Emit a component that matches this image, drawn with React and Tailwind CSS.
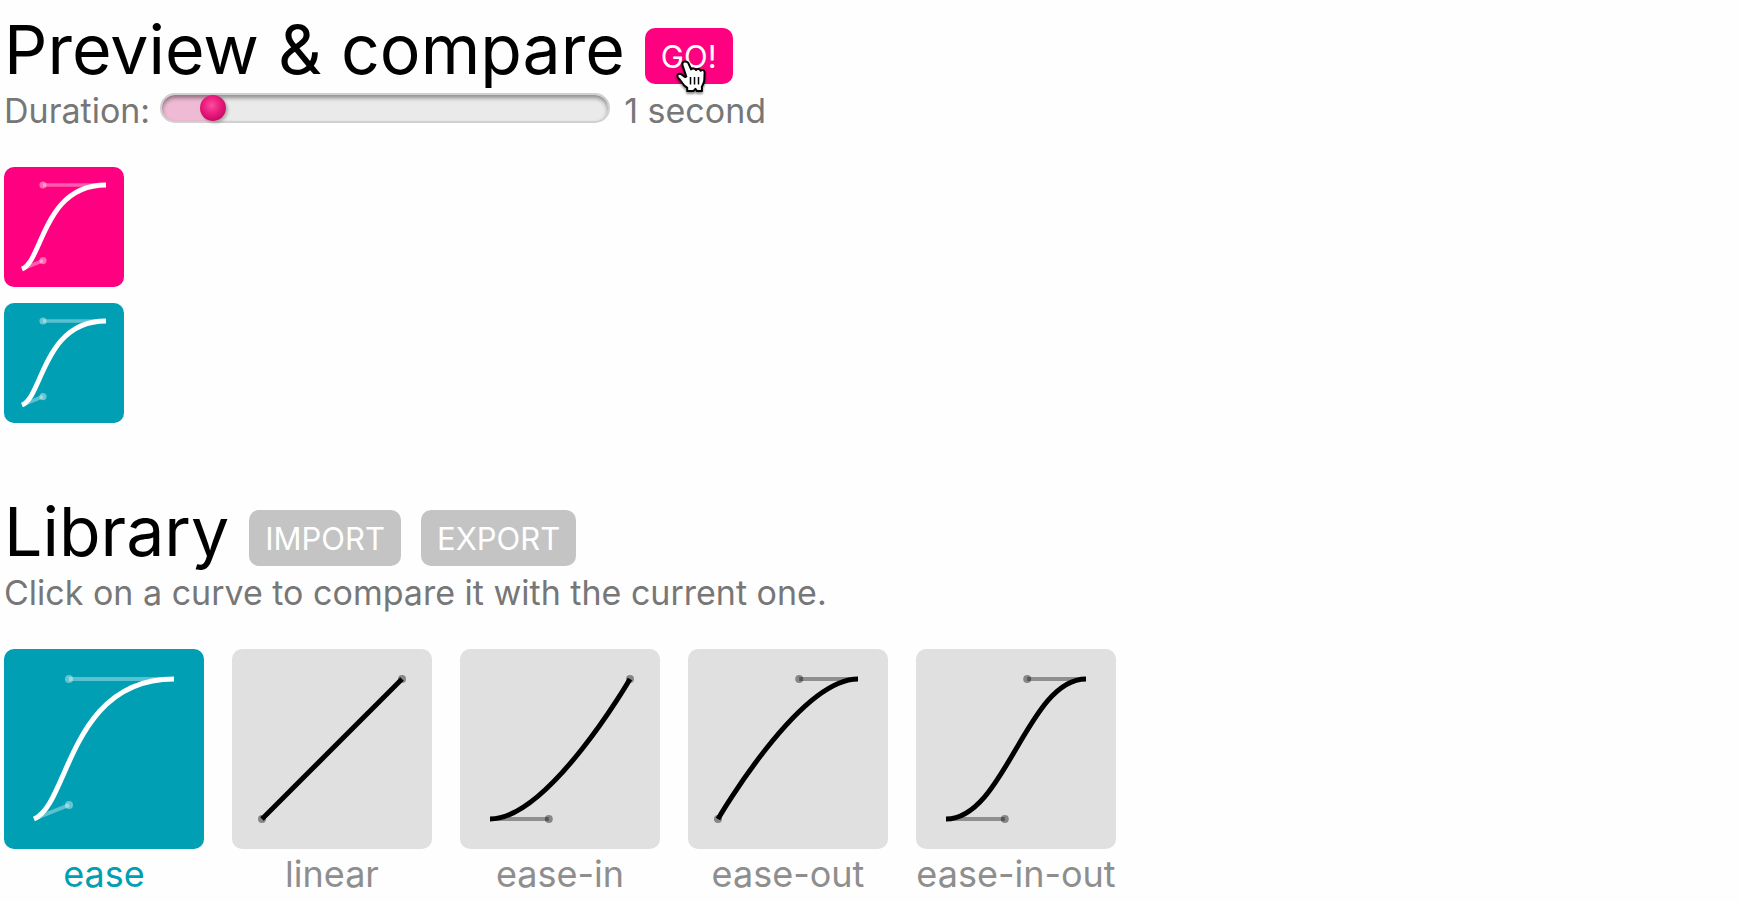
import React, { useState } from "react";

const CURVES = [
  { name: "ease", points: [0.25, 0.1, 0.25, 1] },
  { name: "linear", points: [0, 0, 1, 1] },
  { name: "ease-in", points: [0.42, 0, 1, 1] },
  { name: "ease-out", points: [0, 0, 0.58, 1] },
  { name: "ease-in-out", points: [0.42, 0, 0.58, 1] },
];

function Curve({ points, stroke = 5, handle = 4, dot = 4 }) {
  const px = (v) => 30 + v * 140;
  const py = (v) => 170 - v * 140;
  const [a, b, c, d] = points;
  return (
    <svg viewBox="0 0 200 200" className="block size-full" fill="none" stroke="currentColor" aria-hidden="true">
      <path d={`M${px(0)} ${py(0)}L${px(a)} ${py(b)}M${px(1)} ${py(1)}L${px(c)} ${py(d)}`} strokeWidth={handle} opacity="0.36" />
      <circle cx={px(a)} cy={py(b)} r={dot} fill="currentColor" stroke="none" opacity="0.4" />
      <circle cx={px(c)} cy={py(d)} r={dot} fill="currentColor" stroke="none" opacity="0.4" />
      <path d={`M${px(0)} ${py(0)}C${px(a)} ${py(b)} ${px(c)} ${py(d)} ${px(1)} ${py(1)}`} strokeWidth={stroke} />
    </svg>
  );
}

function HandCursor() {
  return (
    <svg viewBox="0 0 32 34" className="pointer-events-none absolute top-8 left-[30px] h-[34px] w-8 drop-shadow-[0_2px_1px_rgba(0,0,0,0.45)]" aria-hidden="true">
      <path
        d="M10 1.500c-2.600 0-3 2.200-2.300 4.400l3.600 10.600-1 .6-3.400-2.500C4.600 13 2 14 2.400 16.400c.2 1.200 1 2 2 2.800l4.800 6.300 3 2.400v3.200h6.200l2-2.200 1.600 2.200H27l-.2-4.200c1-2 2.400-4 2.500-6.800l.3-7.600c.1-2.400-2.400-3.400-4-1.800-.7-2-3.300-2.200-4.600-.7-1-1.800-3.600-2-4.900-.6l-3-6.700C12.500 2.200 11.500 1.500 10 1.500z"
        fill="#fff"
        stroke="#000"
        strokeWidth="2"
        strokeLinejoin="round"
      />
      <path d="M15.500 17v7.500M19.500 17v7.500M23.500 17v7.500" stroke="#000" strokeWidth="1.500" fill="none" />
    </svg>
  );
}

const BUTTON = "h-14 rounded-[10px] px-4 text-[31px] leading-none text-white";

export default function App() {
  const [duration, setDuration] = useState(1);
  const [selected, setSelected] = useState("ease");
  const current = CURVES.find((c) => c.name === selected);
  const fill = 14 + ((duration - 0.1) / 9.9) * 420;

  return (
    <main className="bg-[#fefefe] pr-4 pb-2 pl-1 font-['Inter',sans-serif] text-[#777]">
      <section>
        <div className="flex items-start gap-5">
          <h1 className="pt-2 text-[68px] leading-[82px] text-black">Preview &amp; compare</h1>
          <div className="relative pt-7">
            <button type="button" className={`${BUTTON} block bg-[#ff0080]`}>GO!</button>
            <div className="absolute top-7 left-0">
              <HandCursor />
            </div>
          </div>
        </div>
        <div className="flex h-10 items-start text-[34px] leading-[42px]">
          <label htmlFor="duration" className="mr-2.5">Duration:</label>
          <input
            id="duration"
            type="range"
            min="0.1"
            max="10"
            step="0.1"
            value={duration}
            onChange={(e) => setDuration(Number(e.target.value))}
            className="mt-[3px] h-[30px] w-[450px] appearance-none rounded-full border-2 border-[#d0d0d0] shadow-[inset_0_3px_4px_rgba(0,0,0,0.4)] [&::-webkit-slider-thumb]:size-[26px] [&::-webkit-slider-thumb]:appearance-none [&::-webkit-slider-thumb]:rounded-full [&::-webkit-slider-thumb]:bg-[radial-gradient(circle_at_45%_40%,#ff4ba0,#e6197a_45%,#a8004f)] [&::-webkit-slider-thumb]:shadow-[2px_2px_3px_rgba(0,0,0,0.25)]"
            style={{ background: `linear-gradient(to right, #efbad3 ${fill}px, #e9eae9 ${fill}px)` }}
          />
          <output htmlFor="duration" className="ml-3.5">{duration} second{duration === 1 ? "" : "s"}</output>
        </div>
        <div className="mt-[37px] flex flex-col gap-4 text-white">
          <div className="size-[120px] rounded-[10px] bg-[#ff0080]">
            <Curve points={CURVES[0].points} stroke={8} handle={6} dot={6} />
          </div>
          <div className="size-[120px] rounded-[10px] bg-[#009fb3]">
            <Curve points={current.points} stroke={8} handle={6} dot={6} />
          </div>
        </div>
      </section>

      <section className="mt-[67px]">
        <div className="flex items-start">
          <h1 className="mr-5 text-[68px] leading-[82px] text-black">Library</h1>
          <div className="flex gap-5 pt-5">
            <button type="button" className={`${BUTTON} bg-[#c4c4c4]`}>IMPORT</button>
            <button type="button" className={`${BUTTON} bg-[#c4c4c4]`}>EXPORT</button>
          </div>
        </div>
        <p className="text-[34px] leading-[42px]">Click on a curve to compare it with the current one.</p>
        <div className="mt-[35px] flex flex-wrap gap-7">
          {CURVES.map(({ name, points }) => {
            const active = name === selected;
            return (
              <button key={name} type="button" aria-pressed={active} onClick={() => setSelected(name)} className="w-[200px]">
                <span className={`block size-[200px] rounded-[10px] ${active ? "bg-[#009fb3] text-white" : "bg-[#e0e0e0] text-black"}`}>
                  <Curve points={points} />
                </span>
                <span className={`block text-[36px] leading-[50px] whitespace-nowrap ${active ? "text-[#009fb3]" : "text-[#8e8e8e]"}`}>{name}</span>
              </button>
            );
          })}
        </div>
      </section>
    </main>
  );
}
